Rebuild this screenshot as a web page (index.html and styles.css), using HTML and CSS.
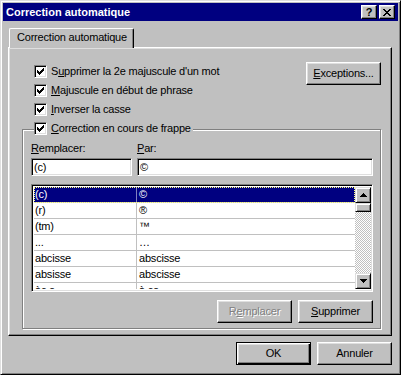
FILE: index.html
```html
<!DOCTYPE html>
<html lang="fr">
<head>
<meta charset="utf-8">
<title>Correction automatique</title>
<link rel="stylesheet" href="styles.css">
</head>
<body>
<div class="window">
  <div class="titlebar">
    <span class="title">Correction automatique</span>
    <div class="tb-buttons">
      <span class="tb-btn help">?</span>
      <span class="tb-btn close">
        <svg width="8" height="7" viewBox="0 0 8 7" shape-rendering="crispEdges">
          <rect x="0" y="0" width="2" height="1"/><rect x="6" y="0" width="2" height="1"/>
          <rect x="1" y="1" width="2" height="1"/><rect x="5" y="1" width="2" height="1"/>
          <rect x="2" y="2" width="4" height="1"/>
          <rect x="3" y="3" width="2" height="1"/>
          <rect x="2" y="4" width="4" height="1"/>
          <rect x="1" y="5" width="2" height="1"/><rect x="5" y="5" width="2" height="1"/>
          <rect x="0" y="6" width="2" height="1"/><rect x="6" y="6" width="2" height="1"/>
        </svg>
      </span>
    </div>
  </div>

  <div class="content">
    <div class="tabs">
      <div class="tab">Correction automatique</div>
    </div>
    <div class="panel">
      <div class="opts">
        <div class="opt-list">
          <div class="check">
            <span class="box"><svg class="tick" width="7" height="7" viewBox="0 0 7 7" shape-rendering="crispEdges"><rect x="6" y="0" width="1" height="1"/><rect x="5" y="1" width="2" height="1"/><rect x="0" y="2" width="1" height="1"/><rect x="4" y="2" width="3" height="1"/><rect x="0" y="3" width="2" height="1"/><rect x="3" y="3" width="3" height="1"/><rect x="0" y="4" width="5" height="1"/><rect x="1" y="5" width="3" height="1"/><rect x="2" y="6" width="1" height="1"/></svg></span>
            <span class="lbl">S<u>u</u>pprimer la 2e majuscule d'un mot</span>
          </div>
          <div class="check">
            <span class="box"><svg class="tick" width="7" height="7" viewBox="0 0 7 7" shape-rendering="crispEdges"><rect x="6" y="0" width="1" height="1"/><rect x="5" y="1" width="2" height="1"/><rect x="0" y="2" width="1" height="1"/><rect x="4" y="2" width="3" height="1"/><rect x="0" y="3" width="2" height="1"/><rect x="3" y="3" width="3" height="1"/><rect x="0" y="4" width="5" height="1"/><rect x="1" y="5" width="3" height="1"/><rect x="2" y="6" width="1" height="1"/></svg></span>
            <span class="lbl"><u>M</u>ajuscule en début de phrase</span>
          </div>
          <div class="check">
            <span class="box"><svg class="tick" width="7" height="7" viewBox="0 0 7 7" shape-rendering="crispEdges"><rect x="6" y="0" width="1" height="1"/><rect x="5" y="1" width="2" height="1"/><rect x="0" y="2" width="1" height="1"/><rect x="4" y="2" width="3" height="1"/><rect x="0" y="3" width="2" height="1"/><rect x="3" y="3" width="3" height="1"/><rect x="0" y="4" width="5" height="1"/><rect x="1" y="5" width="3" height="1"/><rect x="2" y="6" width="1" height="1"/></svg></span>
            <span class="lbl"><u>I</u>nverser la casse</span>
          </div>
        </div>
        <div class="btn exc"><span><u>E</u>xceptions...</span></div>
      </div>

      <div class="group">
        <div class="check legend">
          <span class="box"><svg class="tick" width="7" height="7" viewBox="0 0 7 7" shape-rendering="crispEdges"><rect x="6" y="0" width="1" height="1"/><rect x="5" y="1" width="2" height="1"/><rect x="0" y="2" width="1" height="1"/><rect x="4" y="2" width="3" height="1"/><rect x="0" y="3" width="2" height="1"/><rect x="3" y="3" width="3" height="1"/><rect x="0" y="4" width="5" height="1"/><rect x="1" y="5" width="3" height="1"/><rect x="2" y="6" width="1" height="1"/></svg></span>
          <span class="lbl"><u>C</u>orrection en cours de frappe</span>
        </div>

        <div class="fields">
          <span class="flabel"><u>R</u>emplacer:</span>
          <span class="flabel"><u>P</u>ar:</span>
          <div class="input">(c)</div>
          <div class="input">©</div>
        </div>

        <div class="list">
          <div class="rows">
            <div class="row sel"><span class="c1">(c)</span><span class="c2">©</span></div>
            <div class="row"><span class="c1">(r)</span><span class="c2">®</span></div>
            <div class="row"><span class="c1">(tm)</span><span class="c2">™</span></div>
            <div class="row"><span class="c1">...</span><span class="c2">…</span></div>
            <div class="row"><span class="c1">abcisse</span><span class="c2">abscisse</span></div>
            <div class="row"><span class="c1">absisse</span><span class="c2">abscisse</span></div>
            <div class="row"><span class="c1">àc e</span><span class="c2">à ce</span></div>
          </div>
          <div class="scrollbar">
            <div class="sb-btn">
              <svg width="7" height="4" viewBox="0 0 7 4" shape-rendering="crispEdges"><rect x="3" y="0" width="1" height="1"/><rect x="2" y="1" width="3" height="1"/><rect x="1" y="2" width="5" height="1"/><rect x="0" y="3" width="7" height="1"/></svg>
            </div>
            <div class="sb-thumb"></div>
            <div class="sb-track"></div>
            <div class="sb-btn">
              <svg width="7" height="4" viewBox="0 0 7 4" shape-rendering="crispEdges"><rect x="0" y="0" width="7" height="1"/><rect x="1" y="1" width="5" height="1"/><rect x="2" y="2" width="3" height="1"/><rect x="3" y="3" width="1" height="1"/></svg>
            </div>
          </div>
        </div>

        <div class="grp-buttons">
          <div class="btn disabled"><span>R<u>e</u>mplacer</span></div>
          <div class="btn"><span><u>S</u>upprimer</span></div>
        </div>
      </div>
    </div>

    <div class="footer">
      <div class="btn default"><span>OK</span></div>
      <div class="btn"><span>Annuler</span></div>
    </div>
  </div>
</div>
</body>
</html>
```

FILE: styles.css
```css
* {
  box-sizing: border-box;
}

html, body {
  margin: 0;
  padding: 0;
  background: #c0c0c0;
}

body {
  font-family: "Liberation Sans", Arial, sans-serif;
  font-size: 11px;
  line-height: 13px;
  color: #000;
}

.window {
  width: 401px;
  height: 375px;
  background: #c0c0c0;
  border: 1px solid;
  border-color: #dfdfdf #000 #000 #dfdfdf;
  box-shadow: inset 1px 1px #fff, inset -1px -1px #808080;
  padding: 2px;
  display: flex;
  flex-direction: column;
}

/* Title bar */
.titlebar {
  height: 18px;
  background: #000080;
  display: flex;
  align-items: center;
  justify-content: space-between;
  padding: 0 3px;
}

.title {
  color: #fff;
  font-weight: bold;
  font-size: 11px;
  line-height: 13px;
}

.tb-buttons {
  display: flex;
  gap: 2px;
}

.tb-btn {
  width: 16px;
  height: 14px;
  background: #c0c0c0;
  border: 1px solid;
  border-color: #fff #000 #000 #fff;
  box-shadow: inset -1px -1px #808080, inset 1px 1px #dfdfdf;
  display: flex;
  align-items: center;
  justify-content: center;
}

.tb-btn.help {
  font-weight: bold;
  font-size: 11px;
  line-height: 11px;
  padding-top: 1px;
}

.tb-btn svg {
  display: block;
  fill: #000;
}

/* Content */
.content {
  padding: 7px 6px 0 5px;
  letter-spacing: -0.2px;
}

.tabs {
  display: flex;
  padding-left: 1px;
}

.tab {
  position: relative;
  z-index: 1;
  width: 125px;
  height: 20px;
  margin-bottom: -1px;
  background: #c0c0c0;
  border-top: 1px solid #fff;
  border-left: 1px solid #fff;
  border-right: 1px solid #000;
  border-radius: 2px 2px 0 0;
  box-shadow: inset -1px 0 #808080;
  padding: 2px 0 0 7px;
  white-space: nowrap;
}

.panel {
  height: 289px;
  border: 1px solid;
  border-color: #fff #000 #000 #fff;
  box-shadow: inset -1px -1px #808080, inset 1px 1px #dfdfdf;
  padding: 14px 10px 0 0;
}

.opts {
  display: flex;
  justify-content: space-between;
  align-items: flex-start;
  padding-left: 25px;
}

.check {
  display: flex;
  align-items: center;
  height: 19px;
  gap: 4px;
  white-space: nowrap;
}

.box {
  width: 13px;
  height: 13px;
  flex: none;
  background: #fff;
  border: 1px solid;
  border-color: #808080 #fff #fff #808080;
  box-shadow: inset 1px 1px #000, inset -1px -1px #dfdfdf;
  padding: 2px 0 0 2px;
}

.tick {
  display: block;
  fill: #000;
}

.btn {
  width: 75px;
  height: 23px;
  background: #c0c0c0;
  border: 1px solid;
  border-color: #fff #000 #000 #fff;
  box-shadow: inset -1px -1px #808080, inset 1px 1px #dfdfdf;
  display: flex;
  align-items: center;
  justify-content: center;
  white-space: nowrap;
}

.btn.default {
  border-color: #000;
  box-shadow: inset 1px 1px #fff, inset -1px -1px #000, inset -2px -2px #808080, inset 2px 2px #dfdfdf;
}

.btn.disabled {
  color: #808080;
  text-shadow: 1px 1px #fff;
}

/* Group box */
.group {
  width: 359px;
  height: 200px;
  margin: 10px 0 0 13px;
  border: 1px solid #808080;
  box-shadow: inset 1px 1px #fff, 1px 1px #fff;
  padding: 0 7px 0 8px;
}

.legend {
  width: max-content;
  margin: -11px 0 0 3px;
  padding-right: 2px;
  background: #c0c0c0;
}

.fields {
  display: grid;
  grid-template-columns: 101px 236px;
  column-gap: 5px;
  row-gap: 3px;
  margin-top: 4px;
}

.flabel {
  line-height: 13px;
}

.input {
  height: 18px;
  background: #fff;
  border: 1px solid;
  border-color: #808080 #fff #fff #808080;
  box-shadow: inset 1px 1px #000, inset -1px -1px #dfdfdf;
  padding: 2px 0 0 2px;
  line-height: 13px;
}

/* List */
.list {
  margin-top: 8px;
  width: 342px;
  height: 108px;
  background: #fff;
  border: 1px solid;
  border-color: #808080 #fff #fff #808080;
  box-shadow: inset 1px 1px #000, inset -1px -1px #dfdfdf;
  padding: 2px 1px 2px 2px;
  display: flex;
}

.rows {
  flex: 1;
  overflow: hidden;
}

.row {
  display: grid;
  grid-template-columns: 103px 1fr;
  height: 16px;
  border-bottom: 1px solid #c0c0c0;
  line-height: 15px;
  white-space: nowrap;
}

.c1 {
  padding-left: 1px;
  border-right: 1px solid #c0c0c0;
}

.c2 {
  padding-left: 2px;
}

.row.sel {
  background: #000080;
  color: #fff;
  outline: 1px dotted #ffff80;
  outline-offset: -1px;
}

.row.sel .c1 {
  border-right-color: #7f7fbf;
}

.scrollbar {
  width: 16px;
  display: flex;
  flex-direction: column;
}

.sb-btn {
  width: 16px;
  height: 16px;
  flex: none;
  background: #c0c0c0;
  border: 1px solid;
  border-color: #dfdfdf #000 #000 #dfdfdf;
  box-shadow: inset 1px 1px #fff, inset -1px -1px #808080;
  display: flex;
  align-items: center;
  justify-content: center;
}

.sb-btn svg {
  display: block;
  fill: #000;
}

.sb-thumb {
  height: 9px;
  flex: none;
  background: #c0c0c0;
  border: 1px solid;
  border-color: #dfdfdf #000 #000 #dfdfdf;
  box-shadow: inset 1px 1px #fff, inset -1px -1px #808080;
}

.sb-track {
  flex: 1;
  background: repeating-conic-gradient(#c0c0c0 0 25%, #fff 0 50%) 0 0 / 2px 2px;
}

.grp-buttons {
  display: flex;
  justify-content: flex-end;
  gap: 6px;
  margin-top: 8px;
}

.footer {
  display: flex;
  justify-content: flex-end;
  gap: 6px;
  margin-top: 6px;
}
```
